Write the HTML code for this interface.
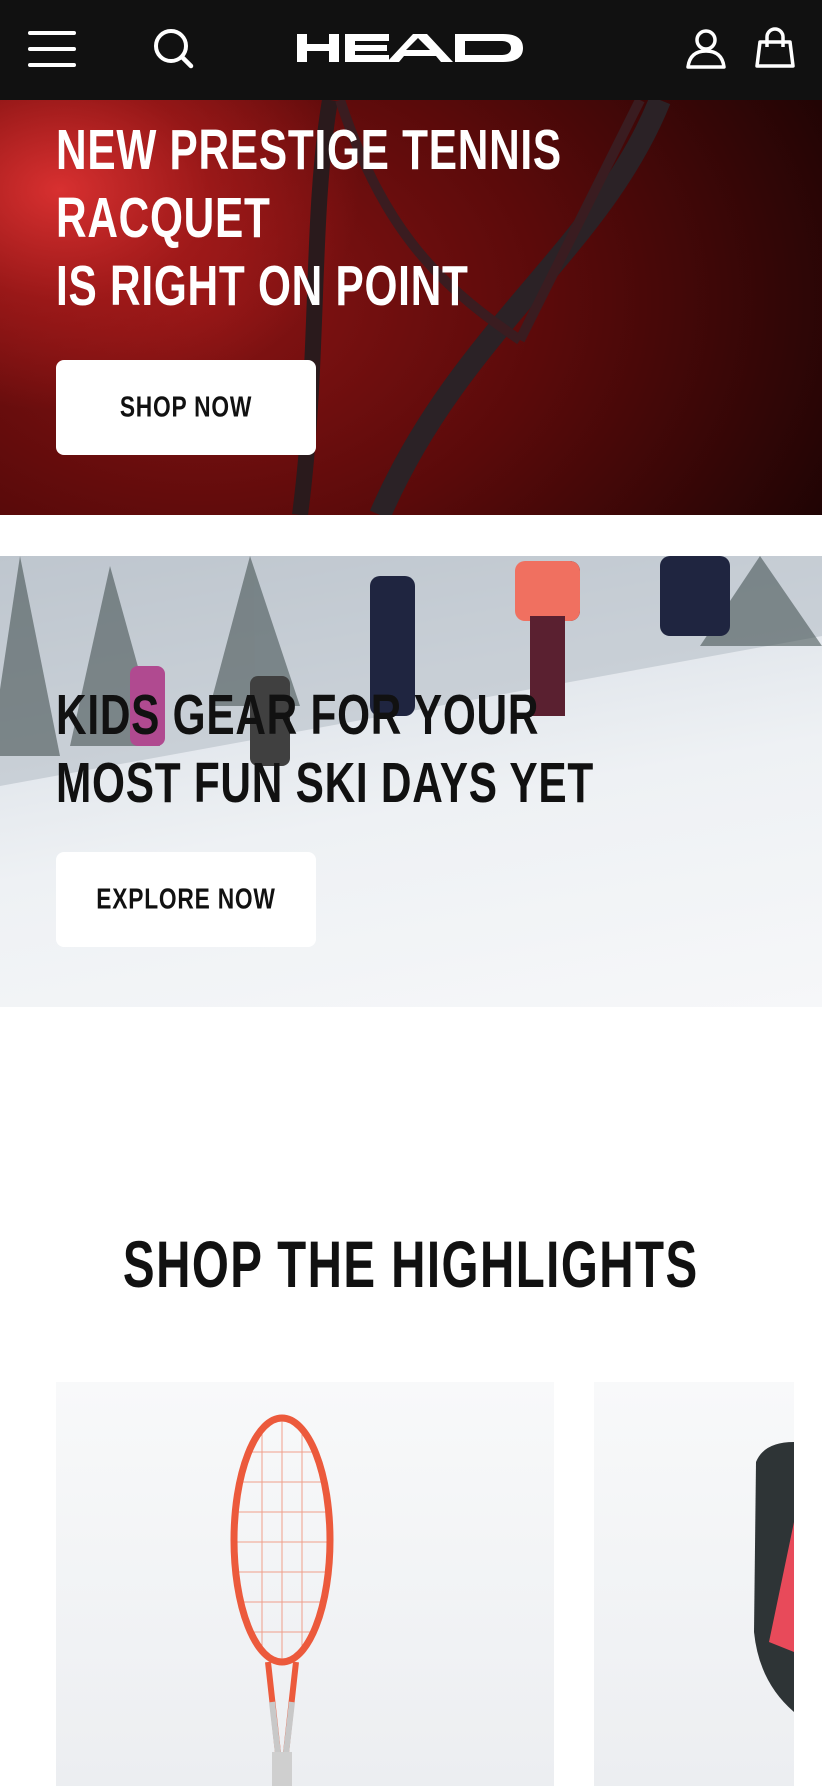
<!DOCTYPE html>
<html><head><meta charset="utf-8"><style>
*{margin:0;padding:0;box-sizing:border-box}
body{width:822px;height:1786px;overflow:hidden;background:#fff;font-family:"Liberation Sans",sans-serif;position:relative}
.hdr{position:absolute;left:0;top:0;width:822px;height:100px;background:#111}
.abs{position:absolute}
.cond{display:inline-block;transform:scaleX(0.743);transform-origin:left center;white-space:nowrap;font-weight:bold;letter-spacing:1px}
.hero1{position:absolute;left:0;top:100px;width:822px;height:415px;overflow:hidden;
background:radial-gradient(ellipse 300px 220px at 60px 90px,#d83030 0%,rgba(180,30,30,0.6) 50%,rgba(0,0,0,0) 100%),radial-gradient(ellipse 700px 500px at 200px 200px,#8a1414 0%,#5a0a0a 50%,#1e0404 100%)}
.hero2{position:absolute;left:0;top:556px;width:822px;height:451px;overflow:hidden;
background:linear-gradient(170deg,#c9d0d8 0%,#dfe4ea 30%,#eef1f4 55%,#f6f7f9 100%)}
.h1t{position:absolute;left:56px;font-size:57px;line-height:68px;color:#fff}
.btn{position:absolute;left:56px;width:260px;height:95px;background:#fff;border-radius:8px}
.btn span{position:absolute;top:50%;left:50%;font-size:29px;color:#111;font-weight:bold;white-space:nowrap;transform:translate(-50%,-50%) scaleX(0.785);letter-spacing:1px}
</style></head><body>
<div class="hdr">
<svg class="abs" style="left:28px;top:30px" width="48" height="38"><g stroke="#fff" stroke-width="4" stroke-linecap="round"><line x1="2" y1="3" x2="46" y2="3"/><line x1="2" y1="19" x2="46" y2="19"/><line x1="2" y1="35" x2="46" y2="35"/></g></svg>
<svg class="abs" style="left:152px;top:27px" width="44" height="44"><circle cx="19" cy="19" r="15" fill="none" stroke="#fff" stroke-width="4"/><line x1="30" y1="30" x2="39" y2="39" stroke="#fff" stroke-width="4.5" stroke-linecap="round"/></svg>
<svg class="abs" style="left:297px;top:34px" width="226" height="28" viewBox="0 0 226 28"><g fill="#fff">
<path d="M0 0h10v10h22V0h10v28H32V17H10v11H0z"/>
<path d="M48 0h44v7H58v4h32v6H58v4h34v7H48z"/>
<path d="M116 0h14l26 28h-12l-5-6h-32l-5 6H90zM109 16h24l-12-12z"/>
<path d="M158 0h48c12 0 20 4 20 14s-8 14-20 14h-48zM168 7v14h36c6 0 10-2 10-7s-4-7-10-7z"/></g></svg>
<svg class="abs" style="left:685px;top:27px" width="42" height="42"><circle cx="21" cy="13" r="9" fill="none" stroke="#fff" stroke-width="3.5"/><path d="M3 40 Q5 24 21 24 Q37 24 39 40 Z" fill="none" stroke="#fff" stroke-width="3.5" stroke-linejoin="round"/></svg>
<svg class="abs" style="left:754px;top:26px" width="42" height="44"><path d="M6 16h30l3 24H3z" fill="none" stroke="#fff" stroke-width="3.5" stroke-linejoin="round"/><path d="M13 21V11a8 8 0 0 1 16 0v10" fill="none" stroke="#fff" stroke-width="3.5"/></svg>
</div>

<div class="hero1">
<svg class="abs" style="left:0;top:0" width="822" height="415"><g fill="none">
<path d="M330 0 C310 120 320 260 300 415" stroke="#2a1a1c" stroke-width="16"/>
<path d="M660 0 C600 150 460 230 380 415" stroke="#2b2226" stroke-width="22"/>
<path d="M340 0 C380 120 430 180 520 240" stroke="#3a1c20" stroke-width="10"/>
<path d="M640 0 C600 80 560 160 520 240" stroke="#3a1c20" stroke-width="10"/>
</g></svg>
<div class="h1t" style="top:16px"><span class="cond">NEW PRESTIGE TENNIS</span><br><span class="cond">RACQUET</span><br><span class="cond">IS RIGHT ON POINT</span></div>
<div class="btn" style="top:260px"><span>SHOP NOW</span></div>
</div>

<div class="hero2">
<svg class="abs" style="left:0;top:0" width="822" height="451">
<path d="M0 0h822v80L0 230z" fill="#b7c0c8" opacity="0.6"/>
<g fill="#3d4a4a" opacity="0.55"><polygon points="20,0 60,200 -10,200"/><polygon points="110,10 160,190 70,190"/><polygon points="250,0 300,150 210,150"/><polygon points="760,0 822,90 700,90"/></g>
<g fill="#1f2540"><rect x="370" y="20" width="45" height="140" rx="10"/><rect x="520" y="5" width="60" height="60" rx="10"/><rect x="660" y="0" width="70" height="80" rx="10"/></g>
<rect x="515" y="5" width="65" height="60" fill="#f07060" rx="10"/>
<rect x="530" y="60" width="35" height="100" fill="#5a2030"/>
<rect x="130" y="110" width="35" height="80" fill="#b04a90" rx="8"/>
<rect x="250" y="120" width="40" height="90" fill="#404040" rx="8"/>
</svg>
<div class="h1t" style="top:125px;color:#111"><span class="cond">KIDS GEAR FOR YOUR</span><br><span class="cond">MOST FUN SKI DAYS YET</span></div>
<div class="btn" style="top:296px"><span>EXPLORE NOW</span></div>
</div>

<div class="abs" style="left:0;top:1226px;width:822px;text-align:center;font-size:66px;line-height:76px;color:#111;font-weight:bold"><span style="display:inline-block;transform:scaleX(0.72);white-space:nowrap;letter-spacing:2px">SHOP THE HIGHLIGHTS</span></div>

<div class="abs" style="left:56px;top:1382px;width:498px;height:404px;background:linear-gradient(180deg,#f8f9fa,#eceef1)">
<svg class="abs" style="left:0;top:0" width="498" height="404">
<g stroke="#f08a70" stroke-width="1" opacity="0.8">
<line x1="190" y1="70" x2="262" y2="70"/><line x1="182" y1="100" x2="270" y2="100"/><line x1="179" y1="130" x2="273" y2="130"/><line x1="178" y1="160" x2="274" y2="160"/><line x1="179" y1="190" x2="273" y2="190"/><line x1="183" y1="220" x2="269" y2="220"/><line x1="192" y1="250" x2="260" y2="250"/>
<line x1="206" y1="45" x2="206" y2="270"/><line x1="226" y1="38" x2="226" y2="278"/><line x1="246" y1="45" x2="246" y2="270"/></g>
<ellipse cx="226" cy="158" rx="48" ry="122" fill="none" stroke="#ec5a3c" stroke-width="7"/>
<path d="M212 280 L223 380 M240 280 L229 380" stroke="#ec5a3c" stroke-width="6"/>
<path d="M216 320 L223 380 M236 320 L229 380" stroke="#c8c8c8" stroke-width="6"/>
<rect x="216" y="370" width="20" height="34" fill="#cfcfcf"/>
</svg></div>

<div class="abs" style="left:594px;top:1382px;width:200px;height:404px;background:linear-gradient(180deg,#f8f9fa,#eceef1);overflow:hidden">
<svg class="abs" style="left:0;top:0" width="200" height="404"><path d="M200 60 Q170 60 162 80 L160 250 Q165 300 200 330z" fill="#2e3436"/><path d="M200 140 L175 260 L200 270z" fill="#e84a5a"/></svg>
</div>
</body></html>
